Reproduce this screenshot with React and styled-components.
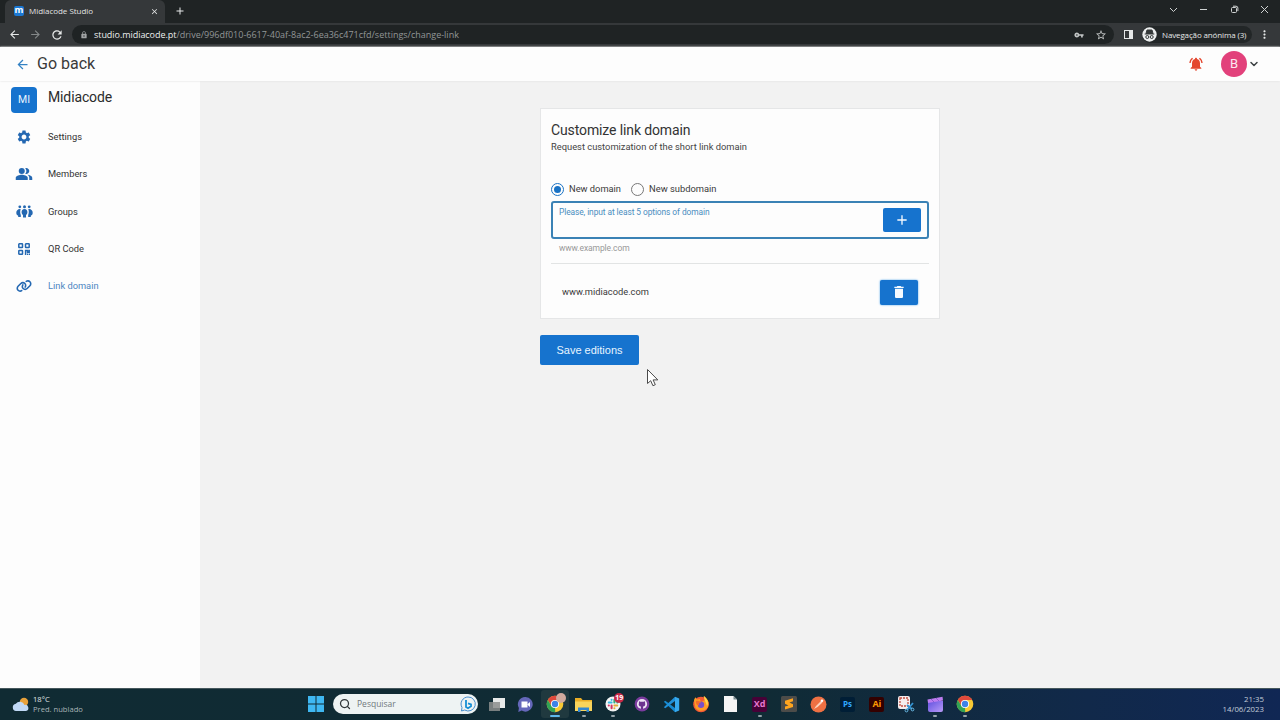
import React from "react";
import styled, { createGlobalStyle } from "styled-components";
import {
  MdArrowBack, MdArrowForward, MdRefresh, MdLock, MdStarBorder, MdMoreVert, MdVpnKey,
  MdNotificationsActive, MdSettings, MdAdd, MdDelete, MdClose, MdPeopleAlt,
} from "react-icons/md";
import { FaLink } from "react-icons/fa6";
import { ChevronDown, Search } from "lucide-react";

const Global = createGlobalStyle`
  * { box-sizing: border-box; }
  body { margin: 0; overflow: hidden; font-family: Roboto, "Liberation Sans", sans-serif; }
  svg { display: block; flex: none; }
`;

const Desktop = styled.div`
  position: relative;
  width: 1280px;
  height: 720px;
  display: flex;
  flex-direction: column;
  overflow: hidden;
  background: #f2f2f2;
`;

const Label = styled.span`
  display: block;
  white-space: nowrap;
  font-size: ${(p) => p.$size}px;
  line-height: ${(p) => p.$line || 12}px;
  letter-spacing: ${(p) => p.$track || 0}px;
  font-weight: ${(p) => p.$weight || 400};
  color: ${(p) => p.$color || "#3a3a3a"};
  ${(p) => p.$system && 'font-family: "Open Sans", "Noto Sans", sans-serif;'}
`;

/* browser chrome */
const TabStrip = styled.div`
  flex: none;
  height: 23px;
  padding-left: 5px;
  display: flex;
  align-items: center;
  background: #1f2324;
`;
const Tab = styled.div`
  width: 160px;
  height: 23px;
  padding: 0 6px 1px 9px;
  display: flex;
  align-items: center;
  border-radius: 6px 6px 0 0;
  background: #35383a;
  color: #e4e6e6;
`;
const Favicon = styled.div`
  width: 10px;
  height: 10px;
  margin-right: 5px;
  border-radius: 2px;
  background: #1b78d4;
  color: #fff;
  font: 700 9px/8px "Open Sans", sans-serif;
  text-align: center;
  display: flex;
  justify-content: center;
`;
const TabTitle = styled.div`flex: 1;`;
const NewTab = styled.div`margin: 0 0 1px 9px; color: #e9ebeb;`;
const WindowControls = styled.div`
  margin-left: auto;
  padding: 0 11px 4px 0;
  display: flex;
  align-items: center;
  gap: 21.5px;
  color: #cfd2d2;
`;
const Toolbar = styled.div`
  flex: none;
  height: 24px;
  padding: 0 8px;
  display: flex;
  align-items: center;
  background: #35383a;
  border-bottom: 1px solid #505355;
  color: #e6e8e8;
`;
const NavButtons = styled.div`display: flex; gap: 8px; width: 64px;`;
const AddressBar = styled.div`
  width: 1042px;
  height: 19px;
  padding: 0 7px 0 8px;
  display: flex;
  align-items: center;
  border-radius: 10px;
  background: #1f2324;
`;
const Url = styled.div`flex: 1; display: flex; margin-left: 6px;`;
const AddressActions = styled.div`display: flex; gap: 11px; align-items: center; color: #c3c6c6;`;
const SidePanel = styled.div`
  width: 9px;
  height: 9px;
  margin: 0 10px 0 10px;
  border: 1.5px solid #e6e8e8;
  border-right-width: 4px;
`;
const Incognito = styled.div`
  width: 110px;
  height: 17px;
  margin-left: -1px;
  display: flex;
  align-items: center;
  gap: 5px;
  border-radius: 9px;
  background: #222627;
`;
const MenuDots = styled.div`margin-left: 6px;`;

/* application */
const Header = styled.header`
  position: relative;
  flex: none;
  height: 34px;
  padding: 0 20px 0 15px;
  display: flex;
  align-items: center;
  background: #fdfdfd;
  box-shadow: 0 0 2px #ddd;
`;
const BackTitle = styled.div`flex: 1; margin-left: 7px;`;
const Avatar = styled.div`
  width: 26px;
  height: 26px;
  margin: 0 1px 0 17px;
  border-radius: 50%;
  display: grid;
  place-items: center;
  background: #e2417b;
`;
const Body = styled.div`flex: 1; min-height: 0; display: flex;`;
const Sidebar = styled.nav`
  width: 200px;
  background: #fdfdfd;
`;
const Workspace = styled.div`
  height: 37.5px;
  padding: 6px 0 0 11px;
  display: flex;
  gap: 11px;
`;
const WorkspaceBadge = styled.div`
  width: 26px;
  height: 26px;
  border-radius: 4px;
  display: grid;
  place-items: center;
  background: #1673ce;
`;
const NavItem = styled.div`
  height: 37.3px;
  padding-left: 15px;
  display: flex;
  align-items: center;
  gap: 15px;
  color: #2468b2;
`;
const NavIcon = styled.div`width: 18px; display: grid; place-items: center;`;
const Main = styled.main`padding: 27px 0 0 340px;`;
const Card = styled.section`
  width: 400px;
  height: 211px;
  padding: 13px 10px 0 10px;
  border: 1px solid #e5e6e7;
  background: #fdfdfd;
`;
const RadioGroup = styled.div`
  height: 14px;
  margin-top: 26px;
  display: flex;
  align-items: center;
`;
const Radio = styled.span`
  width: 13px;
  height: 13px;
  margin: 0 5px 0 ${(p) => (p.$on ? 0 : 10)}px;
  border: 1.5px solid ${(p) => (p.$on ? "#1972c4" : "#777")};
  border-radius: 50%;
  display: grid;
  place-items: center;
  &::after {
    content: "";
    width: 7px;
    height: 7px;
    border-radius: 50%;
    background: ${(p) => (p.$on ? "#1972c4" : "transparent")};
  }
`;
const DomainField = styled.div`
  height: 38px;
  margin-top: 5px;
  padding: 0 6px;
  display: flex;
  justify-content: space-between;
  border: 2px solid #3b82b5;
  border-radius: 3px;
`;
const FieldLabel = styled.div`padding-top: 3px;`;
const Button = styled.button`
  width: ${(p) => p.$w}px;
  height: ${(p) => p.$h}px;
  margin: ${(p) => p.$m || 0};
  padding: 0;
  border: 0;
  border-radius: 2px;
  display: grid;
  place-items: center;
  background: #1673ce;
  color: #f5faff;
  box-shadow: ${(p) => (p.$raised ? "0 0 2px #3f9be8" : "none")};
`;
const Hint = styled.div`
  height: 25px;
  padding: 3px 0 0 8px;
  border-bottom: 1px solid #e2e4e4;
`;
const DomainRow = styled.div`
  height: 56px;
  padding: 0 11px;
  display: flex;
  align-items: center;
  justify-content: space-between;
`;
const Cursor = styled.svg`position: absolute; left: 646px; top: 368px;`;

/* taskbar */
const Taskbar = styled.footer`
  position: relative;
  flex: none;
  height: 32px;
  padding: 0 16px 1px 12px;
  display: flex;
  align-items: center;
  background: linear-gradient(90deg, #102b33 0%, #102b35 60%, #11294a 85%, #102754 100%);
  border-top: 1px solid #45575c;
`;
const Weather = styled.div`width: 296px; display: flex; align-items: center; gap: 3px;`;
const SearchBox = styled.div`
  width: 145px;
  height: 20px;
  margin: 0 4px 0 9px;
  padding: 0 2px 0 6px;
  display: flex;
  align-items: center;
  gap: 6px;
  border-radius: 10px;
  background: #eef3f3;
  color: #303638;
`;
const SearchText = styled.div`flex: 1;`;
const AppRow = styled.div`display: flex; width: 499px; gap: 1.3px;`;
const AppSlot = styled.div`
  position: relative;
  width: 28px;
  height: 28px;
  display: grid;
  place-items: center;
  border-radius: 3px;
  background: ${(p) => (p.$active ? "#20393f" : "transparent")};
  &::after {
    content: "";
    position: absolute;
    left: calc(50% - ${(p) => (p.$active ? 5 : 2)}px);
    bottom: 1px;
    width: ${(p) => (p.$active ? 10 : 4)}px;
    height: 2px;
    border-radius: 1px;
    background: ${(p) => (p.$active ? "#5fb9ea" : p.$running ? "#93a2a8" : "transparent")};
  }
`;
const AppTile = styled.div`
  width: 15px;
  height: 15px;
  border-radius: 2px;
  background: ${(p) => p.$bg};
  color: ${(p) => p.$fg};
  font: 700 ${(p) => p.$fs || 8}px/14px "Open Sans", sans-serif;
  text-align: center;
`;
const NotificationBadge = styled.span`
  position: absolute;
  right: 3px;
  top: 3px;
  width: 10px;
  height: 10px;
  border-radius: 50%;
  background: ${(p) => p.$bg};
  color: white;
  font: 700 7px/10px "Open Sans", sans-serif;
  text-align: center;
`;
const Clock = styled.div`margin-left: auto; text-align: right;`;

const GroupsIcon = () => (
  <svg width="17" height="13" viewBox="0 0 17 13" fill="#2468b2">
    <circle cx="3.8" cy="1.8" r="1.4" /><circle cx="8.5" cy="1.7" r="1.5" /><circle cx="13.2" cy="1.8" r="1.4" />
    <path d="M4.7 4C2 3.5.3 5.4.3 7.8c0 1.7.8 2.6 1.9 2.9v1.2h2.6v-2C4 8 4 5.8 4.7 4ZM12.3 4c2.7-.5 4.4 1.4 4.4 3.8 0 1.7-.8 2.6-1.9 2.9v1.2h-2.6v-2c.8-1.9.8-4.1.1-5.9Z" />
    <path d="M8.5 4c-2 0-2.9 1.4-2.9 3.1 0 1.5.5 2.4 1.4 2.9v2.5h3V10c.9-.5 1.4-1.4 1.4-2.9C11.4 5.4 10.500 4 8.500 4Z" />
  </svg>
);
const QrIcon = () => (
  <svg width="12" height="12" viewBox="0 0 12 12" fill="none" stroke="#2468b2" strokeWidth="1.5">
    <rect x=".8" y=".8" width="3.7" height="3.7" rx=".5" /><rect x="7.5" y=".8" width="3.7" height="3.7" rx=".5" />
    <rect x=".8" y="7.5" width="3.7" height="3.7" rx=".5" /><path d="M7.600 12V7.6h2v1.6h1.6V6.7M9 11.2h1M10.6 11.2h1.4" />
  </svg>
);
const ChromeLogo = () => (
  <svg width="18" height="18" viewBox="0 0 18 18">
    <circle cx="9" cy="9" r="8.3" fill="#f7c934" />
    <path d="M1.8 4.9A8.3 8.3 0 0 1 16.2 4.9H9L5.5 11Z" fill="#df493c" />
    <path d="M1.8 4.9 5.4 11 9 12.9 9.3 17.3A8.3 8.3 0 0 1 1.8 4.9Z" fill="#31a456" />
    <circle cx="9" cy="9" r="4.1" fill="#fff" /><circle cx="9" cy="9" r="3.2" fill="#3d82e8" />
  </svg>
);
const FolderIcon = () => (
  <svg width="17" height="15" viewBox="0 0 17 15">
    <path d="M0 1h6l1.6 2H17v11H0Z" fill="#e9ad26" /><path d="M0 4.500h17V14H0Z" fill="#f8d45c" />
    <path d="M3 10.5h11V15h-2.5v-2h-6v2H3Z" fill="#3187d0" />
  </svg>
);
const SlackIcon = () => (
  <svg width="16" height="16" viewBox="0 0 17 17" fill="none" strokeWidth="2.2" strokeLinecap="round">
    <circle cx="8.5" cy="8.5" r="8" fill="#f3f4f4" />
    <path d="M4 7h3M7 4v.1" stroke="#36b9e5" /><path d="M10 4v3M13 7h.1" stroke="#33ac7c" />
    <path d="M10 10h3M10 13v.1" stroke="#e5ad37" /><path d="M7 10v3M4 10h.1" stroke="#d83363" />
  </svg>
);
const GithubIcon = () => (
  <svg width="16" height="16" viewBox="0 0 16 16">
    <circle cx="8" cy="8" r="7.4" fill="#7a3b9d" /><circle cx="8" cy="8" r="5.1" fill="#eee5f5" />
    <path d="M5 5.2 6.4 5.8h3.2L11 5.2l.1 2c.6 1.9-.3 3-2 3.3V13H6.9v-2.5C5.1 10.2 4.2 9.1 4.9 7.2Z" fill="#6c338f" />
  </svg>
);
const CodeIcon = () => (
  <svg width="17" height="17" viewBox="0 0 17 17">
    <path d="M.8 5.8 2.3 4.700 12 12v4.2Z" fill="#168ad1" />
    <path d="M12 .8 16.2 2.5v12L12 16.2Z" fill="#36a9ed" /><path d="M.8 11.2 12 .8V5L2.3 12.300Z" fill="#2090d8" />
  </svg>
);
const FirefoxIcon = () => (
  <svg width="18" height="18" viewBox="0 0 18 18">
    <circle cx="9" cy="9.5" r="7.8" fill="#f45a35" />
    <path d="M2 5 3.3 2.200 5 4.500 7.800 4 9 7l4-2-1.500-4C16 3.300 17.500 8.200 16 12c-3 5-10 5-12.600.7Z" fill="#ff9c25" />
    <path d="M12 1c4.400 4 4.700 7.800 3 10-.4-3-2.800-5-3-10Z" fill="#ffd54b" /><circle cx="9" cy="9.800" r="3.200" fill="#7950c7" />
    <path d="M4 6c2-1 4 .2 5 1.400-2 .3-2.800 1.600-1.400 2.800-2.700.8-4.200-1.800-3.600-4.200Z" fill="#f46b2e" />
  </svg>
);
const FileIcon = () => (
  <svg width="13" height="16" viewBox="0 0 13 16"><path d="M0 0h9.5L13 3.5V16H0Z" fill="#f5f5f5" /><path d="M9.5 0v3.5H13Z" fill="#77898f" /></svg>
);
const PostmanIcon = () => (
  <svg width="17" height="17" viewBox="0 0 17 17"><circle cx="8.5" cy="8.5" r="8" fill="#ee7043" /><path d="m4 13 2-3 5-5 1.5 1.4L7.6 11Z" fill="#fbd2bd" /><circle cx="12" cy="4.8" r="1.3" fill="#fff" /></svg>
);
const SublimeIcon = () => (
  <svg width="16" height="16" viewBox="0 0 16 16"><rect width="16" height="16" rx="1.5" fill="#4c4c49" /><path d="m4 4.7 8-2.4v3L8.4 6.5 12 8.2v2.9L4 13.6v-3l3.5-1.2L4 7.8Z" fill="#ffa51f" /></svg>
);
const SnipIcon = () => (
  <svg width="18" height="18" viewBox="0 0 18 18">
    <rect x="1" y="1" width="12" height="13" rx="2" fill="#f5eded" /><rect x="3" y="3" width="8" height="8" fill="none" stroke="#c24f42" strokeWidth="1.3" strokeDasharray="2 1" />
    <path d="m10 15 6-7M10 10l5 4" stroke="#3493d1" strokeWidth="1.8" /><circle cx="9.500" cy="15.500" r="1.4" fill="none" stroke="#69b8e2" /><circle cx="15.5" cy="14.5" r="1.4" fill="none" stroke="#69b8e2" />
  </svg>
);
const ClipIcon = () => (
  <svg width="17" height="17" viewBox="0 0 17 17">
    <defs><linearGradient id="clip" x2="1" y2="1"><stop stopColor="#6150df" /><stop offset="1" stopColor="#b99bf8" /></linearGradient></defs>
    <path d="M1 5h15v9q0 2-2 2H3q-2 0-2-2Z" fill="url(#clip)" /><path d="M.5 3.5 15.5.8 16 4.5 1 7Z" fill="#bd7df0" /><path d="m4 3 3 3M9 2l3 3" stroke="#8a5bd0" />
  </svg>
);
const TaskViewIcon = () => (
  <svg width="17" height="15" viewBox="0 0 17 15"><rect x="5" y="1" width="12" height="10" fill="#e7e9e9" /><rect x="1" y="5" width="11" height="9" fill="#8c8e8d" opacity=".85" /></svg>
);
const ChatIcon = () => (
  <svg width="17" height="17" viewBox="0 0 17 17"><path d="M8.5 1a7.3 7.3 0 1 1-3.8 13.6L1.3 16l.6-4A7.3 7.3 0 0 1 8.5 1Z" fill="#6567ba" /><path d="M4.5 5.5h6v6h-6ZM10.7 8l2.3-2v5l-2.3-2Z" fill="#fff" /></svg>
);

const apps = [
  { icon: <TaskViewIcon /> },
  { icon: <ChatIcon /> },
  { icon: <ChromeLogo />, active: true, badge: "", badgeColor: "#d2aa9e" },
  { icon: <FolderIcon />, running: true },
  { icon: <SlackIcon />, running: true, badge: "19", badgeColor: "#c92846" },
  { icon: <GithubIcon /> },
  { icon: <CodeIcon /> },
  { icon: <FirefoxIcon /> },
  { icon: <FileIcon /> },
  { icon: <AppTile $bg="#470137" $fg="#e579cf" $fs={9}>Xd</AppTile>, running: true },
  { icon: <SublimeIcon /> },
  { icon: <PostmanIcon /> },
  { icon: <AppTile $bg="#001e36" $fg="#31a8ff">Ps</AppTile> },
  { icon: <AppTile $bg="#330000" $fg="#ff9a00" $fs={9}>Ai</AppTile> },
  { icon: <SnipIcon /> },
  { icon: <ClipIcon />, running: true },
  { icon: <ChromeLogo />, running: true },
];

const navigation = [
  { label: "Settings", icon: <MdSettings size={16} /> },
  { label: "Members", icon: <MdPeopleAlt size={18} /> },
  { label: "Groups", icon: <GroupsIcon /> },
  { label: "QR Code", icon: <QrIcon /> },
  { label: "Link domain", icon: <FaLink size={16} />, selected: true },
];

export default function App() {
  return (
    <Desktop>
      <Global />
      <TabStrip>
        <Tab>
          <Favicon>m</Favicon>
          <TabTitle><Label $system $size={8} $color="#e1e3e3" $track={-0.03} $weight={500}>Midiacode Studio</Label></TabTitle>
          <MdClose size={9} />
        </Tab>
        <NewTab><MdAdd size={12} /></NewTab>
        <WindowControls>
          <svg width="9" height="9" viewBox="0 0 9 9" fill="none" stroke="currentColor"><path d="m1 3 3.5 3.5L8 3" /></svg>
          <svg width="9" height="9" viewBox="0 0 9 9" stroke="currentColor"><path d="M1 4.5h7" /></svg>
          <svg width="9" height="9" viewBox="0 0 9 9" fill="none" stroke="currentColor"><rect x="1.5" y="2.5" width="5" height="5" rx="1" /><path d="M3 1.2h3q1.9 0 1.9 1.9v3" /></svg>
          <svg width="9" height="9" viewBox="0 0 9 9" stroke="currentColor"><path d="m1 1 7 7m0-7L1 8" /></svg>
        </WindowControls>
      </TabStrip>
      <Toolbar>
        <NavButtons>
          <MdArrowBack size={13} />
          <MdArrowForward size={13} color="#85898a" />
          <MdRefresh size={14} />
        </NavButtons>
        <AddressBar>
          <MdLock size={8} color="#a1a4a5" />
          <Url>
            <Label $system $size={9} $weight={500} $track={-0.05} $color="#eceeee">studio.midiacode.pt</Label>
            <Label $system $size={9} $color="#929697">/drive/996df010-6617-40af-8ac2-6ea36c471cfd/settings/change-link</Label>
          </Url>
          <AddressActions><MdVpnKey size={10} /><MdStarBorder size={12} /></AddressActions>
        </AddressBar>
        <SidePanel />
        <Incognito>
          <svg width="15" height="15" viewBox="0 0 15 15"><circle cx="7.5" cy="7.5" r="7.2" fill="#eceeee" /><path d="M5 3h5l1 3.5H4ZM2.7 7h9.6" fill="#343839" stroke="#343839" /><circle cx="5.3" cy="10" r="1.5" fill="none" stroke="#343839" /><circle cx="9.7" cy="10" r="1.5" fill="none" stroke="#343839" /></svg>
          <Label $system $size={8} $track={-0.14} $weight={500} $color="#e6e8e8">Navegação anónima (3)</Label>
        </Incognito>
        <MenuDots><MdMoreVert size={13} /></MenuDots>
      </Toolbar>

      <Header>
        <MdArrowBack size={15} color="#3482c4" />
        <BackTitle><Label $size={16} $line={20}>Go back</Label></BackTitle>
        <MdNotificationsActive size={16} color="#e4472f" />
        <Avatar><Label $size={13} $line={16} $color="#fbe9f0">B</Label></Avatar>
        <ChevronDown size={12} strokeWidth={3} color="#3d4244" />
      </Header>
      <Body>
        <Sidebar>
          <Workspace>
            <WorkspaceBadge><Label $size={10.5} $color="#e8f5ff">MI</Label></WorkspaceBadge>
            <Label $size={14} $track={-0.13} $line={21} $color="#2b2b2b">Midiacode</Label>
          </Workspace>
          {navigation.map((item) => (
            <NavItem key={item.label}>
              <NavIcon>{item.icon}</NavIcon>
              <Label $size={9.3} $color={item.selected ? "#4c86c2" : "#333"}>{item.label}</Label>
            </NavItem>
          ))}
        </Sidebar>
        <Main>
          <Card>
            <Label $size={14} $track={-0.12} $line={16} $color="#333">Customize link domain</Label>
            <Label $size={9.33} $line={18} $color="#444">Request customization of the short link domain</Label>
            <RadioGroup>
              <Radio $on /><Label $size={9.3}>New domain</Label>
              <Radio /><Label $size={9.35}>New subdomain</Label>
            </RadioGroup>
            <DomainField>
              <FieldLabel><Label $size={8.4} $track={-0.08} $color="#4b8dbf">Please, input at least 5 options of domain</Label></FieldLabel>
              <Button $w={38} $h={24} $m="5px 0 0"><MdAdd size={16} /></Button>
            </DomainField>
            <Hint><Label $size={8.5} $track={-0.1} $color="#999">www.example.com</Label></Hint>
            <DomainRow>
              <Label $size={9.3}>www.midiacode.com</Label>
              <Button $w={38} $h={25} $raised><MdDelete size={16} /></Button>
            </DomainRow>
          </Card>
          <Button $w={99} $h={30} $m="16px 0 0"><Label $size={11} $weight={500} $color="#e8f5ff">Save editions</Label></Button>
        </Main>
      </Body>

      <Taskbar>
        <Weather>
          <svg width="18" height="15" viewBox="0 0 18 15"><circle cx="12" cy="5" r="4.2" fill="#e7a13b" /><path d="M4 14a3.7 3.7 0 0 1-.2-7.3A5 5 0 0 1 12.5 8 3 3 0 1 1 14 14Z" fill="#c1d9f6" /></svg>
          <div><Label $system $size={7.6} $line={10.5} $color="#e0e5e6">18°C</Label><Label $system $size={7.6} $line={10.5} $color="#a9b5b8">Pred. nublado</Label></div>
        </Weather>
        <svg width="16" height="16" viewBox="0 0 16 16" fill="#3fb8f2"><path d="M0 0h7.5v7.5H0zM8.5 0H16v7.5H8.5zM0 8.5h7.5V16H0zM8.5 8.5H16V16H8.5z" /></svg>
        <SearchBox>
          <Search size={12} strokeWidth={2.5} />
          <SearchText><Label $system $size={8.5} $color="#70787b">Pesquisar</Label></SearchText>
          <svg width="16" height="16" viewBox="0 0 16 16" fill="none"><path d="M8 1a7 7 0 1 1-3.3 13L1.5 15 2 11.5A7 7 0 0 1 8 1Z" stroke="#468dcd" /><path d="M6 4v7l2 1.2 3-2V8.5L8 7.4" stroke="#168fd5" strokeWidth="1.8" /></svg>
        </SearchBox>
        <AppRow>
          {apps.map((app, i) => (
            <AppSlot key={i} $active={app.active} $running={app.running}>
              {app.icon}
              {app.badgeColor && <NotificationBadge $bg={app.badgeColor}>{app.badge}</NotificationBadge>}
            </AppSlot>
          ))}
        </AppRow>
        <Clock><Label $system $size={7.8} $line={10.5} $color="#c2ccd8">21:35</Label><Label $system $size={7.8} $line={10.5} $color="#c2ccd8">14/06/2023</Label></Clock>
      </Taskbar>
      <Cursor width="14" height="20" viewBox="0 0 14 20"><path d="M1.5 1.5v14l3.2-2.8 2.2 5 2.4-1-2.200-4.800h4.700Z" fill="#fff" stroke="#4b4b4b" /></Cursor>
    </Desktop>
  );
}
